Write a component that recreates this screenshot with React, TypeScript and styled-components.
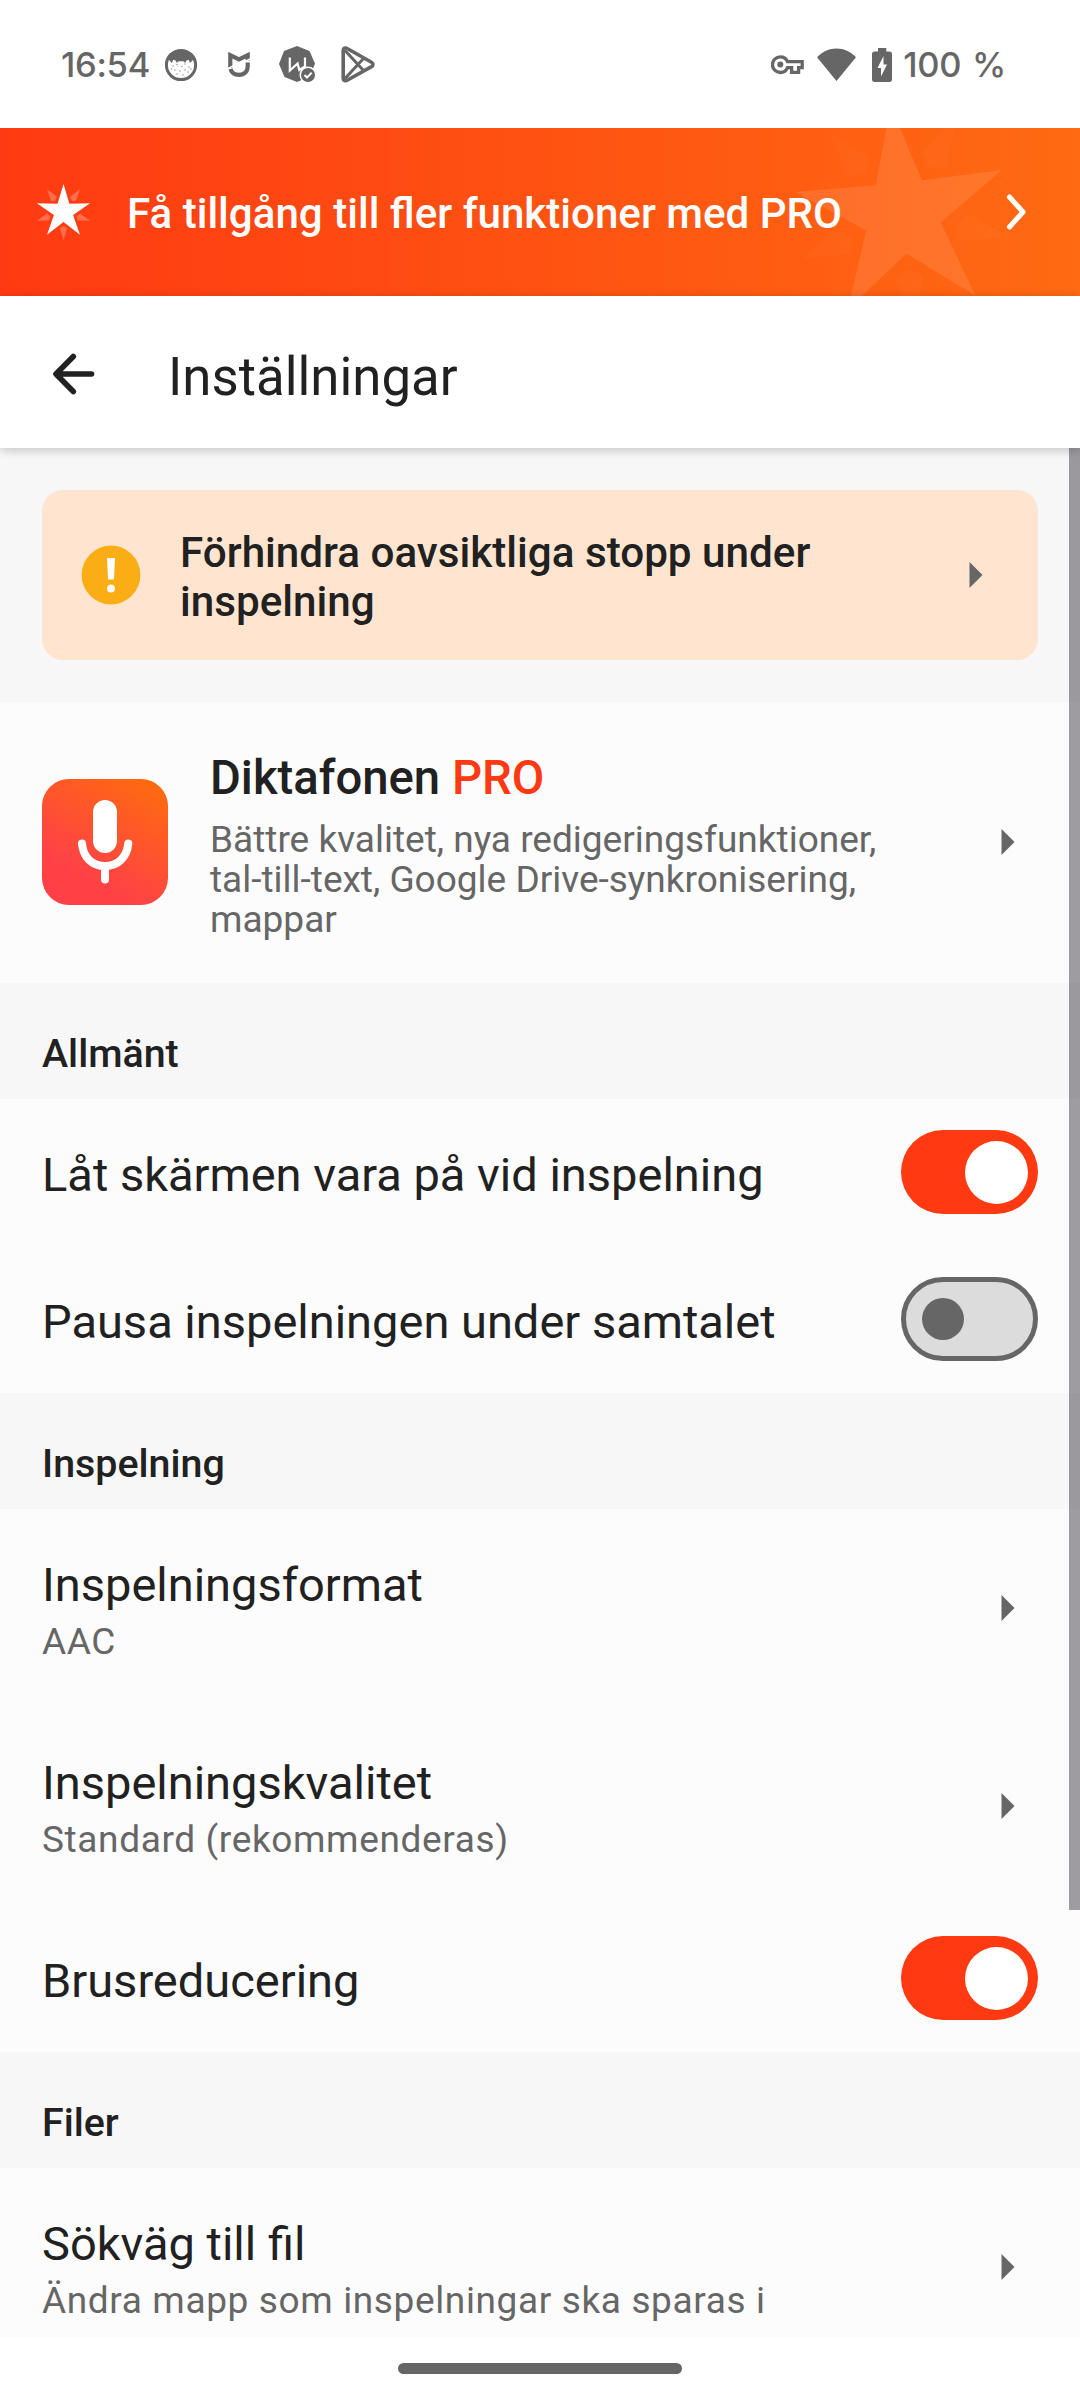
import React from "react";
import styled, { createGlobalStyle, css } from "styled-components";

const Global = createGlobalStyle`
  * { box-sizing: border-box; }
  html, body { margin: 0; padding: 0; background: #fff; }
  body { font-family: Roboto, "Noto Sans", sans-serif; color: #212121; overflow: hidden; }
`;

const Screen = styled.div`
  width: 1080px;
  height: 2400px;
  display: flex;
  flex-direction: column;
  overflow: hidden;
  background: #fff;
`;

const StatusBar = styled.header`
  height: 128px;
  flex: none;
  display: flex;
  align-items: center;
  justify-content: space-between;
  padding: 1px 74px 0 61px;
  color: #666;
`;

const StatusGroup = styled.div`
  display: flex;
  align-items: center;
`;

const StatusText = styled.span<{ $gap?: number }>`
  margin-left: ${(p) => p.$gap ?? 0}px;
  font-family: Inter, Roboto, sans-serif;
  font-size: 34.5px;
  font-weight: 450;
  line-height: 40px;
  letter-spacing: -0.3px;
  word-spacing: 2px;
  white-space: nowrap;
`;

const Glyph = styled.svg<{ $left?: number }>`
  display: block;
  flex: none;
  margin-left: ${(p) => p.$left ?? 0}px;
`;

const Banner = styled.section`
  position: relative;
  height: 168px;
  flex: none;
  display: flex;
  align-items: center;
  padding: 0 54px 0 36px;
  background: linear-gradient(90deg, #ff3a12, #ff6a12);
  overflow: hidden;
`;

const BannerDecoration = styled.svg`
  position: absolute;
  top: 0;
  right: 0;
`;

const BannerText = styled.div`
  position: relative;
  flex: 1;
  margin-left: 36px;
  padding-top: 4px;
  font-size: 42.1px;
  font-weight: 500;
  line-height: 50px;
  color: #fff;
  white-space: nowrap;
`;

const Toolbar = styled.div`
  position: relative;
  z-index: 1;
  height: 152px;
  flex: none;
  display: flex;
  align-items: center;
  padding: 4px 42px 0 50px;
  background: #fff;
  box-shadow: 0 2px 10px rgba(0, 0, 0, 0.22);
`;

const ToolbarTitle = styled.h1`
  margin: 5px 0 0 70px;
  font-size: 52.75px;
  font-weight: 400;
  line-height: 62px;
`;

const List = styled.main`
  position: relative;
  flex: 1;
  min-height: 0;
  overflow: hidden;
  background: #f7f7f7;
`;

const Scrollbar = styled.div`
  position: absolute;
  top: 0;
  right: 0;
  width: 11px;
  height: 1462px;
  background: rgba(64, 60, 68, 0.5);
`;

const NoticeArea = styled.div`
  padding: 42px;
`;

const Notice = styled.div`
  height: 170px;
  padding: 0 55px 0 39px;
  display: flex;
  align-items: center;
  border-radius: 21px;
  background: #ffe5cf;
`;

const NoticeText = styled.div`
  flex: 1;
  margin: 0 60px 0 39px;
  padding-top: 3px;
  font-size: 42.2px;
  font-weight: 500;
  line-height: 49px;
`;

const Row = styled.div<{ $height: number }>`
  height: ${(p) => p.$height}px;
  display: flex;
  align-items: flex-start;
  padding: 48px 42px 0;
  background: #fcfcfc;
`;

const Labels = styled.div<{ $top?: number }>`
  flex: 1;
  padding-top: ${(p) => p.$top ?? 0}px;
`;

const RowTitle = styled.div<{ $medium?: boolean }>`
  font-size: ${(p) => (p.$medium ? 47.25 : 47)}px;
  font-weight: ${(p) => (p.$medium ? 500 : 400)};
  line-height: 55px;
  white-space: nowrap;
`;

const Accent = styled.span`
  color: #ff3a12;
`;

const RowSummary = styled.div`
  margin-top: 8px;
  font-size: 37px;
  line-height: 44px;
  letter-spacing: 0.63px;
  color: #666;
`;

const ProSummary = styled.div`
  margin-top: 14px;
  font-size: 37px;
  line-height: 40.2px;
  color: #666;
  white-space: pre-line;
`;

const indicator = css`
  flex: none;
  align-self: flex-start;
`;

const ArrowSlot = styled.div<{ $top: number; $right: number }>`
  ${indicator}
  margin: ${(p) => p.$top}px ${(p) => p.$right}px 0 0;
`;

const Arrow = styled.svg`
  display: block;
  flex: none;
`;

const SwitchTrack = styled.div<{ $on: boolean }>`
  ${indicator}
  width: 137px;
  height: 84px;
  margin-top: -17px;
  padding: ${(p) => (p.$on ? "0 10.5px" : "0 16px")};
  display: flex;
  align-items: center;
  justify-content: ${(p) => (p.$on ? "flex-end" : "flex-start")};
  border-radius: 42px;
  border: ${(p) => (p.$on ? "none" : "5px solid #666")};
  background: ${(p) => (p.$on ? "#ff3a12" : "#dcdcdc")};
`;

const SwitchThumb = styled.div<{ $on: boolean }>`
  width: ${(p) => (p.$on ? 63 : 42)}px;
  height: ${(p) => (p.$on ? 63 : 42)}px;
  border-radius: 50%;
  background: ${(p) => (p.$on ? "#fff" : "#666")};
`;

const SectionHeader = styled.h2`
  margin: 0;
  height: 116px;
  padding: 48px 42px 0;
  font-size: 39.375px;
  font-weight: 500;
  line-height: 46px;
`;

const AppIcon = styled.svg`
  flex: none;
  display: block;
  margin: 29px 42px 0 0;
`;

const NavBar = styled.footer`
  height: 63px;
  flex: none;
  display: flex;
  align-items: center;
  justify-content: center;
  background: #fff;
`;

const HomePill = styled.div`
  width: 284px;
  height: 11px;
  border-radius: 6px;
  background: #666;
`;

const starPoints = Array.from({ length: 10 }, (_, i) => {
  const r = i % 2 ? 10.1 : 28;
  const a = (i * Math.PI) / 5;
  return `${(r * Math.sin(a)).toFixed(2)},${(-r * Math.cos(a)).toFixed(2)}`;
}).join(" ");

function Starburst({ rayOpacity }: { rayOpacity: number }) {
  return (
    <>
      {[36, 108, 180, 252, 324].map((a) => (
        <polygon
          key={a}
          points="0,-14 3.7,-16.2 0,-28 -3.7,-16.2"
          transform={`rotate(${a})`}
          fill="#fff"
          fillOpacity={rayOpacity}
        />
      ))}
      <polygon points={starPoints} fill="#fff" />
    </>
  );
}

function Triangle() {
  return (
    <Arrow width="14" height="26" viewBox="0 0 14 26">
      <path d="M.5 0 13.5 13 .5 26z" fill="#666" />
    </Arrow>
  );
}

function Switch({ on }: { on: boolean }) {
  return (
    <SwitchTrack $on={on} role="switch" aria-checked={on}>
      <SwitchThumb $on={on} />
    </SwitchTrack>
  );
}

function SwitchRow({ title, on }: { title: string; on: boolean }) {
  return (
    <Row $height={147}>
      <Labels>
        <RowTitle>{title}</RowTitle>
      </Labels>
      <Switch on={on} />
    </Row>
  );
}

function LinkRow({ title, summary }: { title: string; summary: string }) {
  return (
    <Row $height={198}>
      <Labels>
        <RowTitle>{title}</RowTitle>
        <RowSummary>{summary}</RowSummary>
      </Labels>
      <ArrowSlot $top={38} $right={23}>
        <Triangle />
      </ArrowSlot>
    </Row>
  );
}

function StatusIcons() {
  return (
    <>
      <Glyph $left={14} width="34" height="36" viewBox="0 0 34 36" fill="#666">
        <circle cx="17" cy="18" r="14.6" fill="none" stroke="#666" strokeWidth="3" />
        <path d="M4.5 12.500C7 6 11 3.500 17 3.500S27 6 29.500 12.500l-3.500 3.500-1.200-3.200-2.800.9-.6 2.300-2-1.800h-4.800l-2 1.800-.6-2.300-2.800-.9L8 16z" />
        <g fillOpacity="0.8">
          {[
            [9, 19], [13, 17.5], [18, 19.500], [21, 17], [25, 20], [11, 23], [16, 24], [21, 23],
            [13, 27], [19, 28], [24, 25], [7.500, 22], [27, 22],
          ].map(([x, y]) => (
            <circle key={`${x}-${y}`} cx={x} cy={y} r=".65" />
          ))}
        </g>
      </Glyph>
      <Glyph $left={30} width="22" height="26" viewBox="0 0 22 26" fill="none" stroke="#666" strokeWidth="4.200">
        <path d="M2.300 16V3.200L11 7.500l8.700-4.300V8.500" />
        <path d="M19.700 10.500V14c0 5.600-3.400 8.800-8.700 8.800-4.400 0-7.500-2.200-8.500-5.800" />
        <path d="M0 16.500 9 11.800M13.500 11.500 22 7" stroke="#fff" strokeWidth="1.500" />
      </Glyph>
      <Glyph $left={29} width="37" height="37" viewBox="0 0 37 37" fill="#666">
        <path d="M18 0 30.500 5 36 17.500 31 30.500 18 36 5.500 31 0 18 5 5z" />
        <path d="M10.800 11.500v13l7.800-7 1.700 6.500 5.700-3.500v-9" fill="none" stroke="#fff" strokeWidth="2.200" />
        <circle cx="29" cy="29" r="8.500" fill="#fff" />
        <circle cx="29" cy="29" r="7" />
        <path d="m25.500 29 2.500 2.600 4.700-5" fill="none" stroke="#fff" strokeWidth="2" />
      </Glyph>
      <Glyph $left={25} width="34" height="37" viewBox="0 0 34 37" fill="none" stroke="#666" strokeWidth="3.600" strokeLinejoin="round">
        <path d="M2.200 4.500c0-2.200 2-3.200 4-2L30.500 16.200c2 1.200 2 3.200 0 4.400L6.200 34.300c-2 1.200-4 0-4-2z" />
        <path d="M4 4.500 22.500 24.500M4 32.500 22.500 12.500" strokeWidth="3" />
      </Glyph>
    </>
  );
}

function SystemIcons() {
  return (
    <>
      <Glyph width="33" height="20" viewBox="0 0 33 20">
        <path
          d="M9.300 1.800c3.400 0 6 1.800 7.200 4.800h14.700v6h-3.600v4.800h-7v-4.800h-4.100c-1.200 3-3.800 4.900-7.200 4.900a7.850 7.850 0 0 1 0-15.700z"
          fill="none"
          stroke="#666"
          strokeWidth="3.300"
        />
        <circle cx="9.300" cy="9.600" r="3" fill="#666" />
      </Glyph>
      <Glyph $left={13} width="39" height="33" viewBox="0 0 39 33">
        <path d="M19.500 33 0 9.200C5.500 3.500 12 .5 19.500.5S33.500 3.500 39 9.200z" fill="#666" />
      </Glyph>
      <Glyph $left={16} width="20" height="34" viewBox="0 0 20 34">
        <path d="M6 0h8.300v3.500h3.200c1.500 0 2.500 1 2.500 2.500v25.500c0 1.500-1 2.500-2.500 2.500h-15C1 34 0 33 0 31.500V6c0-1.500 1-2.500 2.500-2.500H6z" fill="#666" />
        <path d="M11.500 8v8.500H15L9 28.500V20H5.500z" fill="#fff" />
      </Glyph>
    </>
  );
}

export default function App() {
  return (
    <Screen>
      <Global />
      <StatusBar>
        <StatusGroup>
          <StatusText>16:54</StatusText>
          <StatusIcons />
        </StatusGroup>
        <StatusGroup>
          <SystemIcons />
          <StatusText $gap={11}>100 %</StatusText>
        </StatusGroup>
      </StatusBar>

      <Banner>
        <BannerDecoration width="320" height="168" viewBox="760 128 320 168">
          <g opacity="0.1" transform="translate(902.2 214.5) rotate(-6.1) scale(3.9)">
            <Starburst rayOpacity={0.22} />
          </g>
        </BannerDecoration>
        <Glyph width="55" height="56" viewBox="-27.5 -28 55 56">
          <Starburst rayOpacity={0.25} />
        </Glyph>
        <BannerText>Få tillgång till fler funktioner med PRO</BannerText>
        <Glyph width="20" height="38" viewBox="0 0 20 38">
          <path d="M3.500 4 17 19 3.500 34" fill="none" stroke="#fff" strokeWidth="5" strokeLinecap="round" strokeLinejoin="round" />
        </Glyph>
      </Banner>

      <Toolbar>
        <Glyph width="48" height="48" viewBox="0 0 48 48" fill="none" stroke="#212121" strokeWidth="5.600" strokeLinecap="round" strokeLinejoin="round">
          <path d="M23.300 6.500 6 24l17.300 17.500M6.500 24H41.500" />
        </Glyph>
        <ToolbarTitle>Inställningar</ToolbarTitle>
      </Toolbar>

      <List>
        <NoticeArea>
          <Notice>
            <Glyph width="60" height="60" viewBox="0 0 60 60">
              <circle cx="30" cy="30" r="29.400" fill="#faad14" />
              <path d="M26 13h8l-1 21.500h-6z" fill="#fff" />
              <circle cx="30" cy="43.500" r="3.900" fill="#fff" />
            </Glyph>
            <NoticeText>Förhindra oavsiktliga stopp under inspelning</NoticeText>
            <Triangle />
          </Notice>
        </NoticeArea>

        <Row $height={281}>
          <AppIcon width="126" height="126" viewBox="0 0 126 126">
            <defs>
              <linearGradient id="appIcon" x1="0.85" y1="0" x2="0.25" y2="1">
                <stop offset="0" stopColor="#ff6b0e" />
                <stop offset="0.75" stopColor="#ff4344" />
                <stop offset="1" stopColor="#ff4046" />
              </linearGradient>
            </defs>
            <rect width="126" height="126" rx="27" fill="url(#appIcon)" />
            <rect x="51" y="21" width="24" height="53" rx="12" fill="#fff" />
            <path d="M40 64.500C41 78 50 87 63 87s22-9 23.300-22.500M63 87v13.500" fill="none" stroke="#fff" strokeWidth="8" strokeLinecap="round" />
          </AppIcon>
          <Labels $top={1}>
            <RowTitle $medium>
              Diktafonen <Accent>PRO</Accent>
            </RowTitle>
            <ProSummary>
              {"Bättre kvalitet, nya redigeringsfunktioner,\ntal-till-text, Google Drive-synkronisering,\nmappar"}
            </ProSummary>
          </Labels>
          <ArrowSlot $top={79} $right={23}>
            <Triangle />
          </ArrowSlot>
        </Row>

        <SectionHeader>Allmänt</SectionHeader>
        <SwitchRow title="Låt skärmen vara på vid inspelning" on />
        <SwitchRow title="Pausa inspelningen under samtalet" on={false} />

        <SectionHeader>Inspelning</SectionHeader>
        <LinkRow title="Inspelningsformat" summary="AAC" />
        <LinkRow title="Inspelningskvalitet" summary="Standard (rekommenderas)" />
        <SwitchRow title="Brusreducering" on />

        <SectionHeader>Filer</SectionHeader>
        <LinkRow title="Sökväg till fil" summary="Ändra mapp som inspelningar ska sparas i" />
        <Scrollbar />
      </List>

      <NavBar>
        <HomePill />
      </NavBar>
    </Screen>
  );
}
